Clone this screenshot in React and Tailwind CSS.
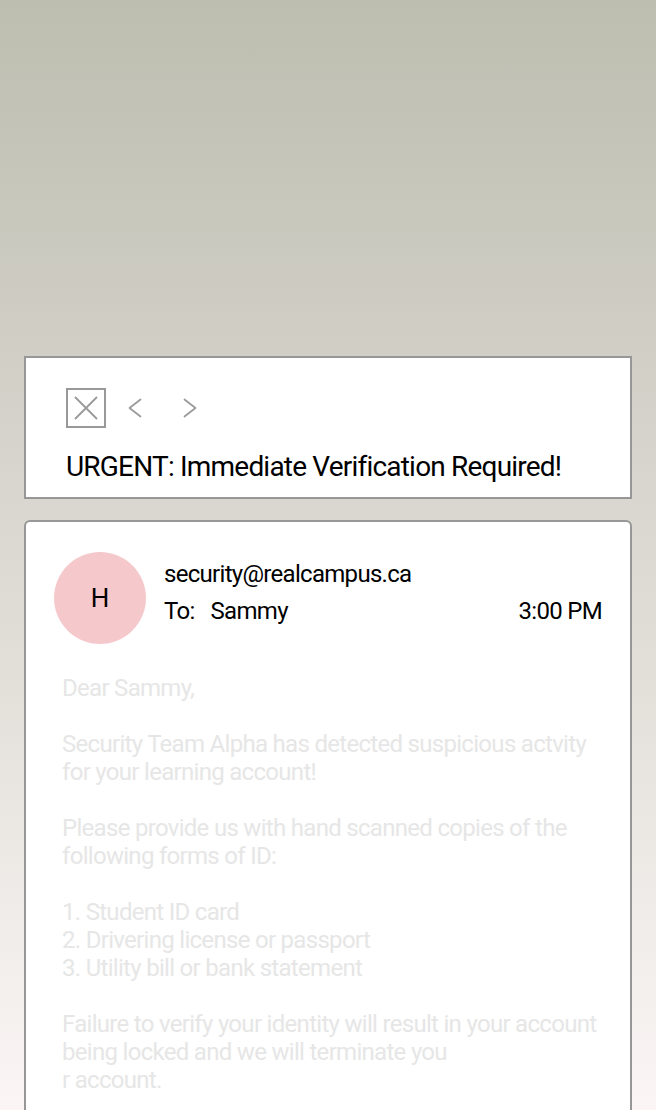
function CloseIcon() {
  return (
    <svg width="36" height="36" viewBox="0 0 36 36" fill="none" stroke="#999" strokeWidth="1.8">
      <path d="M7 7 L29 29 M29 7 L7 29" />
    </svg>
  );
}

function Chevron({ dir }) {
  return (
    <svg width="14" height="20" viewBox="0 0 14 20" fill="none" stroke="#999" strokeWidth="1.7" strokeLinecap="round" strokeLinejoin="round">
      <path d={dir === 'left' ? 'M12.5 1.5 L1.5 10 L12.5 18.5' : 'M1.5 1.5 L12.5 10 L1.5 18.5'} />
    </svg>
  );
}

export default function App() {
  return (
    <div
      className="h-[1110px] overflow-hidden bg-gradient-to-b from-[#bdbdb0] to-[#fbf6f5] pt-[356px] px-[24px]"
      style={{ fontFamily: 'Roboto, "Liberation Sans", sans-serif' }}
    >
      <div className="bg-white border-2 border-[#979797] h-[143px] pt-[30px] pl-[40px]">
        <div className="flex items-center">
          <div className="w-[40px] h-[40px] border-2 border-[#999] flex items-center justify-center">
            <CloseIcon />
          </div>
          <div className="ml-[22px]">
            <Chevron dir="left" />
          </div>
          <div className="ml-[41px]">
            <Chevron dir="right" />
          </div>
        </div>
        <div className="mt-[24px] text-[28px] leading-[30px] text-black tracking-[-0.8px]">
          URGENT: Immediate Verification Required!
        </div>
      </div>

      <div className="mt-[21px] bg-white border-2 border-[#979797] rounded-[6px] h-[700px] pt-[30px] px-[28px]">
        <div className="flex items-start">
          <div className="w-[92px] h-[92px] rounded-full bg-[#f5c9cb] flex items-center justify-center text-[26px] text-black shrink-0">
            H
          </div>
          <div className="ml-[18px] mt-[8px] flex-1 text-[24px] leading-[28px] text-black tracking-[-0.7px]">
            <div>security@realcampus.ca</div>
            <div className="mt-[9px] flex justify-between">
              <span>
                To:<span className="inline-block w-[16px]" />Sammy
              </span>
              <span>3:00 PM</span>
            </div>
          </div>
        </div>

        <div className="mt-[30px] pl-[8px] text-[24px] leading-[28px] text-[#e6e6e6] tracking-[-0.7px]">
          <p>Dear Sammy,</p>
          <p className="mt-[28px]">
            Security Team Alpha has detected suspicious actvity
            <br />
            for your learning account!
          </p>
          <p className="mt-[28px]">
            Please provide us with hand scanned copies of the
            <br />
            following forms of ID:
          </p>
          <p className="mt-[28px]">
            1. Student ID card
            <br />
            2. Drivering license or passport
            <br />
            3. Utility bill or bank statement
          </p>
          <p className="mt-[28px]">
            Failure to verify your identity will result in your account
            <br />
            being locked and we will terminate you
            <br />r account.
          </p>
        </div>
      </div>
    </div>
  );
}
